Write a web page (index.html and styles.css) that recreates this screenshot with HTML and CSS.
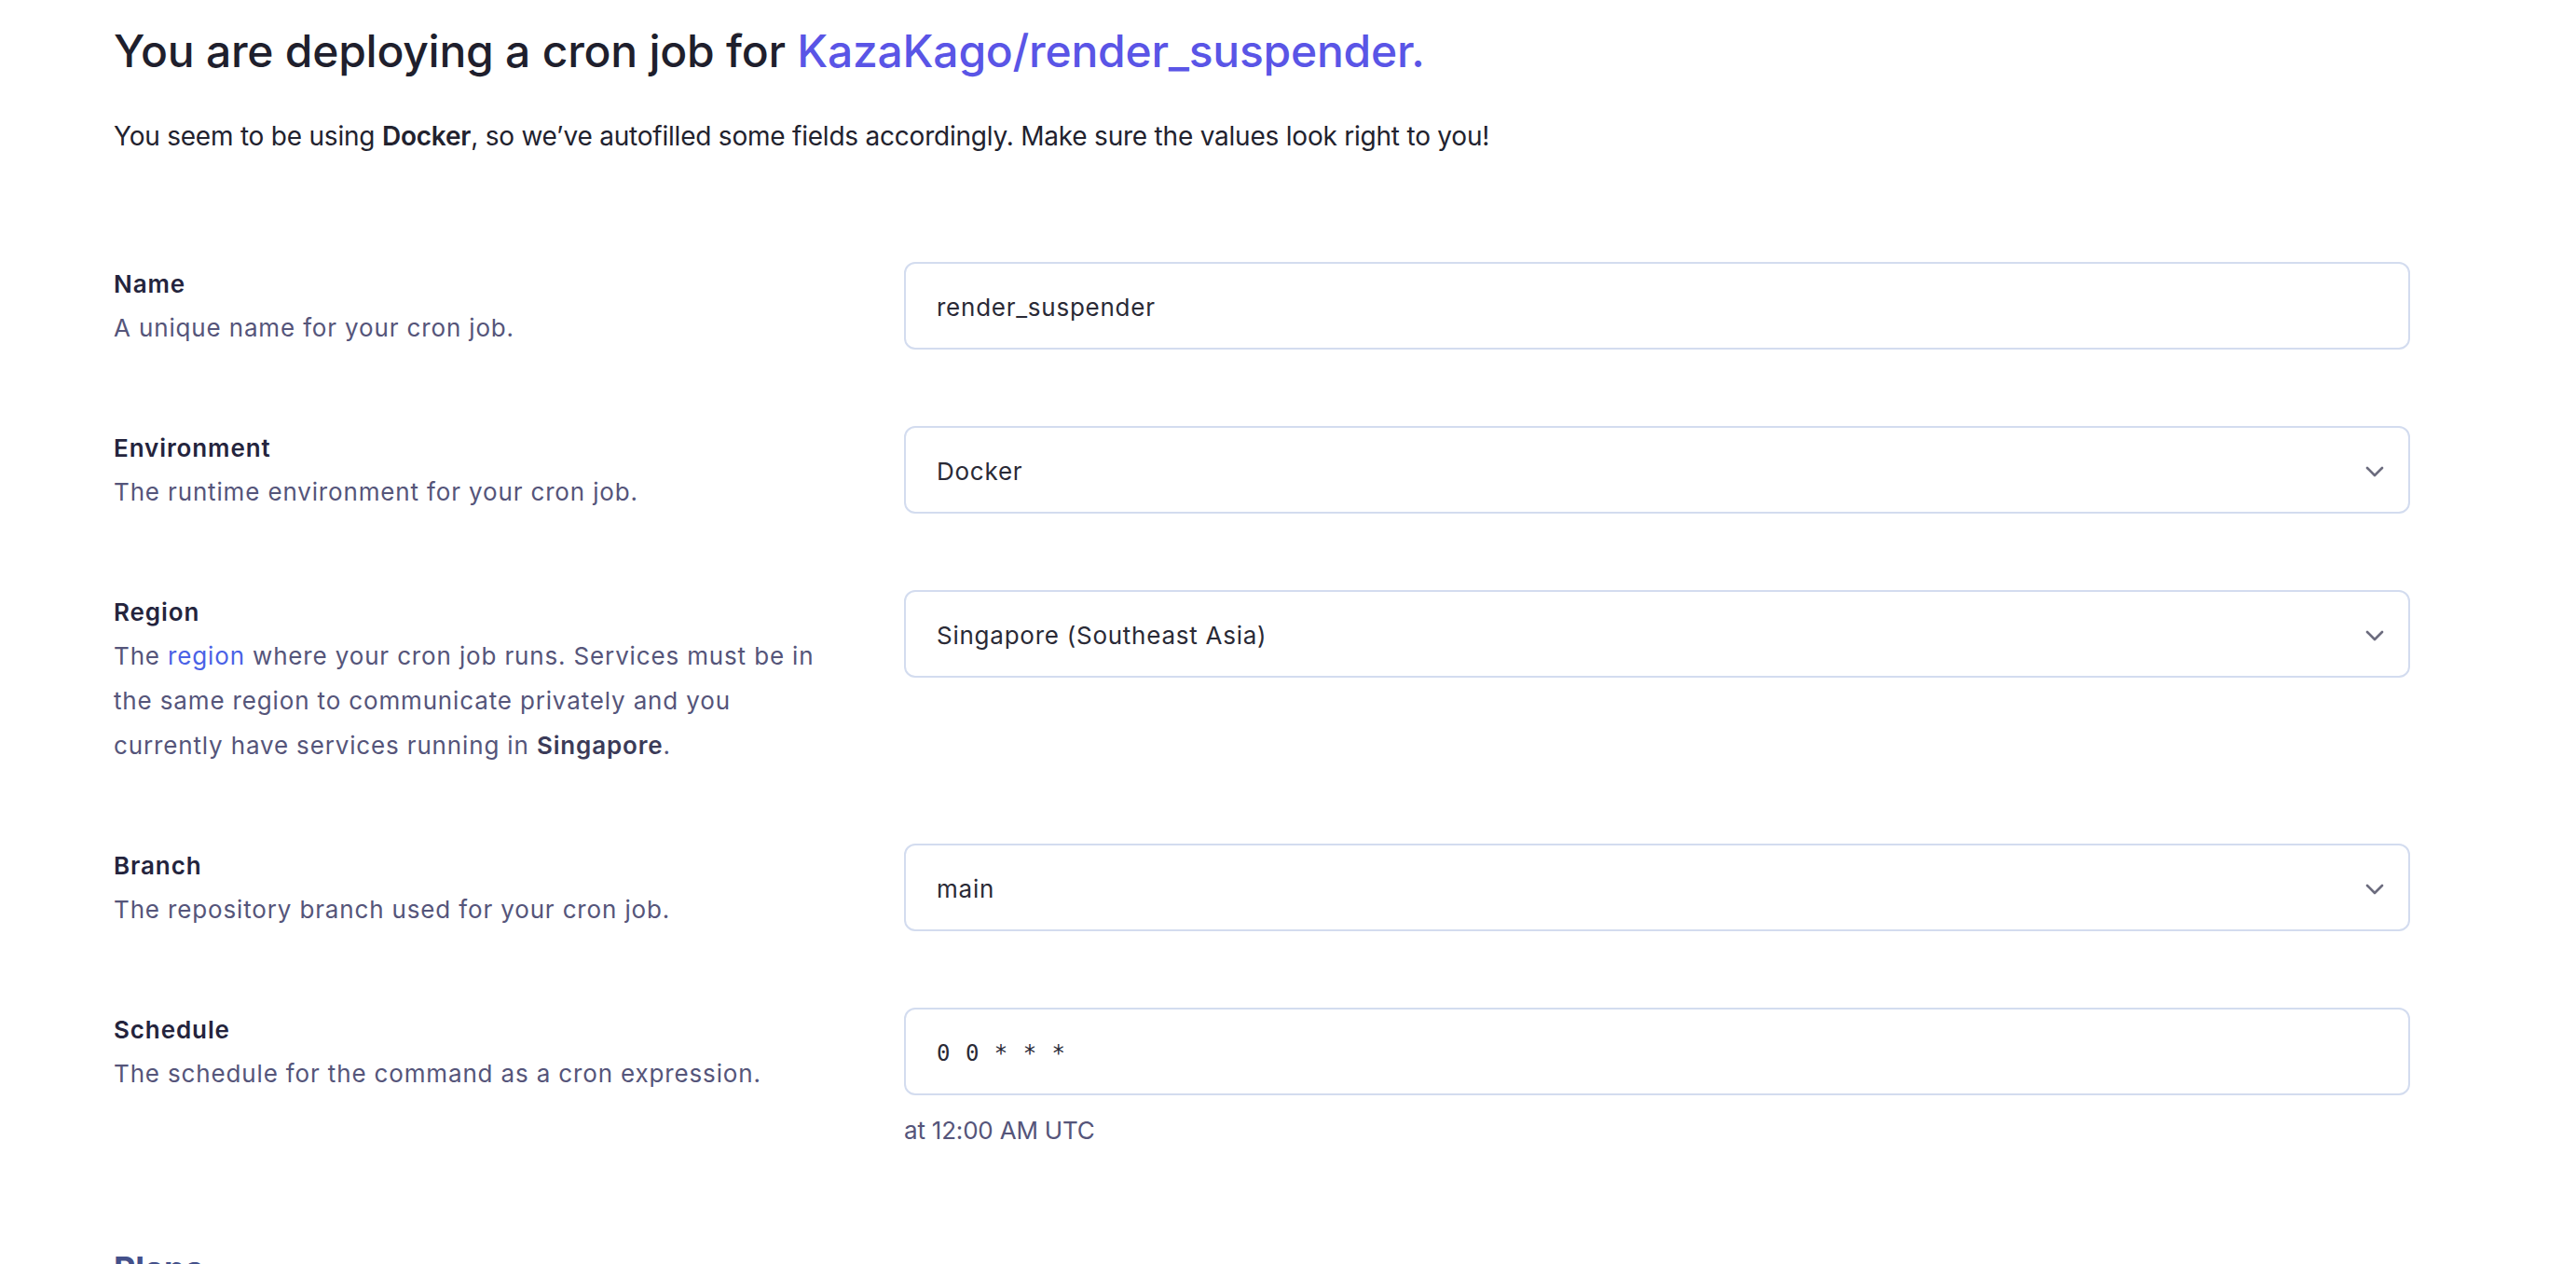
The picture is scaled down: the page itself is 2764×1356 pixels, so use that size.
FILE: index.html
```html
<!DOCTYPE html>
<html lang="en">
<head>
<meta charset="utf-8">
<title>Deploy cron job</title>
<link rel="stylesheet" href="styles.css">
</head>
<body>
<main class="page">
  <h1 class="title">You are deploying a cron job for <a class="repo" href="#">KazaKago/render_suspender.</a></h1>
  <p class="intro">You seem to be using <strong>Docker</strong>, so we’ve autofilled some fields accordingly. Make sure the values look right to you!</p>

  <div class="form">
    <div class="row">
      <div class="info">
        <div class="label">Name</div>
        <div class="desc">A unique name for your cron job.</div>
      </div>
      <div class="field">
        <div class="input">render_suspender</div>
      </div>
    </div>

    <div class="row">
      <div class="info">
        <div class="label">Environment</div>
        <div class="desc">The runtime environment for your cron job.</div>
      </div>
      <div class="field">
        <div class="input select"><span>Docker</span>
          <svg class="chev" viewBox="0 0 20 12" width="20" height="12"><path d="M2 2 L10 10 L18 2" fill="none" stroke="currentColor" stroke-width="2.6" stroke-linecap="round" stroke-linejoin="round"/></svg>
        </div>
      </div>
    </div>

    <div class="row">
      <div class="info">
        <div class="label">Region</div>
        <div class="desc">The <a class="link" href="#">region</a> where your cron job runs. Services must be in the same region to communicate privately and you currently have services running in <strong>Singapore</strong>.</div>
      </div>
      <div class="field">
        <div class="input select"><span>Singapore (Southeast Asia)</span>
          <svg class="chev" viewBox="0 0 20 12" width="20" height="12"><path d="M2 2 L10 10 L18 2" fill="none" stroke="currentColor" stroke-width="2.6" stroke-linecap="round" stroke-linejoin="round"/></svg>
        </div>
      </div>
    </div>

    <div class="row">
      <div class="info">
        <div class="label">Branch</div>
        <div class="desc">The repository branch used for your cron job.</div>
      </div>
      <div class="field">
        <div class="input select"><span>main</span>
          <svg class="chev" viewBox="0 0 20 12" width="20" height="12"><path d="M2 2 L10 10 L18 2" fill="none" stroke="currentColor" stroke-width="2.6" stroke-linecap="round" stroke-linejoin="round"/></svg>
        </div>
      </div>
    </div>

    <div class="row">
      <div class="info">
        <div class="label">Schedule</div>
        <div class="desc">The schedule for the command as a cron expression.</div>
      </div>
      <div class="field">
        <div class="input mono">0 0 * * *</div>
        <div class="hint">at 12:00 AM UTC</div>
      </div>
    </div>
  </div>

  <h2 class="plans">Plans</h2>
</main>
</body>
</html>
```

FILE: styles.css
```css
html, body {
  margin: 0;
  padding: 0;
  background: #ffffff;
}

body {
  font-family: "Inter", "Noto Sans", "Liberation Sans", sans-serif;
  color: #202030;
  overflow: hidden;
}

.page {
  padding: 26px 0 0 122px;
  width: 2464px;
}

.title {
  margin: 0;
  font-size: 48px;
  line-height: 58px;
  font-weight: 500;
  color: #1f1f2d;
  letter-spacing: -0.25px;
}

.repo {
  color: #5a55e6;
  text-decoration: none;
}

.intro {
  margin: 42px 0 0;
  font-size: 28px;
  line-height: 40px;
  color: #22222e;
  letter-spacing: -0.22px;
}

.intro strong {
  font-weight: 600;
}

.form {
  margin-top: 115px;
  display: flex;
  flex-direction: column;
  gap: 81px;
}

.row {
  display: grid;
  grid-template-columns: 848px 1616px;
  align-items: start;
}

.info {
  padding: 7px 0 0;
  max-width: 770px;
}

.label {
  font-size: 26px;
  line-height: 34px;
  font-weight: 600;
  color: #24243d;
  letter-spacing: 0.9px;
  margin-bottom: 6px;
}

.desc {
  font-size: 26px;
  line-height: 48px;
  color: #55557a;
  letter-spacing: 0.85px;
}

.desc strong {
  font-weight: 600;
  color: #3b3b58;
}

.link {
  color: #4a62e6;
  text-decoration: none;
}

.field {
  display: flex;
  flex-direction: column;
}

.input {
  box-sizing: border-box;
  height: 94px;
  border: 2px solid #d3dcef;
  border-radius: 12px;
  padding: 3px 26px 0 33px;
  display: flex;
  align-items: center;
  font-size: 26px;
  line-height: 36px;
  color: #2a2a36;
  letter-spacing: 0.75px;
}

.select {
  justify-content: space-between;
}

.chev {
  width: 20px;
  height: 12px;
  color: #6c6c7e;
}

.mono {
  font-family: "DejaVu Sans Mono", "Liberation Mono", monospace;
  font-size: 24px;
  letter-spacing: 1px;
}

.hint {
  margin-top: 20px;
  font-size: 26px;
  line-height: 36px;
  color: #55557a;
  letter-spacing: -0.2px;
}

.plans {
  margin: 108px 0 0;
  font-size: 36px;
  line-height: 44px;
  font-weight: 700;
  color: #44508a;
}
```
